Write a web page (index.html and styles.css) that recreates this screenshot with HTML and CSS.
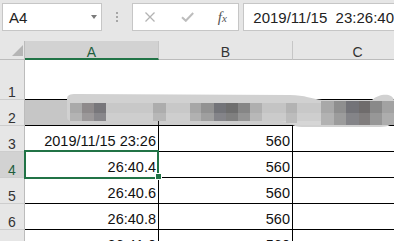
FILE: index.html
```html
<!DOCTYPE html>
<html>
<head>
<meta charset="utf-8">
<link rel="stylesheet" href="styles.css">
</head>
<body>
<div class="app">
  <div class="fbar">
    <div class="namebox"><span class="ref">A4</span><span class="caret"></span></div>
    <div class="grip"><i></i><i></i><i></i></div>
    <div class="fbtns">
      <svg class="ic-x" width="10" height="10" viewBox="0 0 10 10"><path d="M0.5 0.5L9.5 9.5M9.5 0.5L0.5 9.5" stroke="#b3b3b3" stroke-width="1.3" fill="none"/></svg>
      <svg class="ic-ok" width="13" height="10" viewBox="0 0 13 10"><path d="M1 5.2L4.8 8.8L12.2 1" stroke="#bdbdbd" stroke-width="2" fill="none"/></svg>
      <span class="fx">f<i>x</i></span>
    </div>
    <div class="formula">2019/11/15  23:26:40</div>
  </div>
  <div class="sheet">
    <div class="corner"><span class="tri"></span></div>
    <div class="ch sel">A</div><div class="ch">B</div><div class="ch">C</div>

    <div class="rh">1</div><div class="c r1"></div><div class="c r1"></div><div class="c r1"></div>
    <div class="rh">2</div><div class="c r2"></div><div class="c r2"></div><div class="c r2"></div>
    <div class="rh">3</div><div class="c">2019/11/15 23:26</div><div class="c">560</div><div class="c"></div>
    <div class="rh sel">4</div><div class="c active">26:40.4</div><div class="c">560</div><div class="c"></div>
    <div class="rh">5</div><div class="c">26:40.6</div><div class="c">560</div><div class="c"></div>
    <div class="rh">6</div><div class="c">26:40.8</div><div class="c">560</div><div class="c"></div>
    <div class="rh">7</div><div class="c">26:41.0</div><div class="c">560</div><div class="c"></div>
  </div>
  <svg class="redact" width="394" height="241" viewBox="0 0 394 241">
    <path d="M67 99C67 95 70 94 76 94L290 95C305 95 312 99 322 100L372 100C378 94 392 92 394 100L394 121C392 126 385 127 378 127L302 127C292 127 290 122 280 121L72 121C68 121 67 119 67 117Z" fill="#d1d1d1"/>
    <rect x="70" y="103" width="324" height="18" fill="#c8c8c8"/>
    <rect x="70" y="103" width="12" height="18" fill="#a9a9a9"/>
    <rect x="82" y="103" width="12" height="18" fill="#8e8a8b"/>
    <rect x="94" y="103" width="12" height="18" fill="#78777b"/>
    <rect x="153" y="103" width="13" height="18" fill="#adadad"/>
    <rect x="190" y="103" width="11" height="18" fill="#a7a7a7"/>
    <rect x="201" y="103" width="13" height="18" fill="#929292"/>
    <rect x="214" y="103" width="12" height="18" fill="#737479"/>
    <rect x="226" y="103" width="12" height="18" fill="#6e6e6e"/>
    <rect x="238" y="103" width="12" height="18" fill="#868686"/>
    <rect x="250" y="103" width="12" height="18" fill="#afafaf"/>
    <rect x="262" y="103" width="24" height="18" fill="#c4c4c4"/>
    <rect x="286" y="103" width="11" height="20" fill="#b3b3b3"/>
    <rect x="321" y="101" width="13" height="24" fill="#a8a8a8"/>
    <rect x="334" y="101" width="12" height="24" fill="#8f8f8f"/>
    <rect x="346" y="101" width="13" height="24" fill="#737378"/>
    <rect x="359" y="101" width="11" height="24" fill="#6f6c6c"/>
    <rect x="370" y="101" width="12" height="24" fill="#898989"/>
    <rect x="382" y="101" width="12" height="24" fill="#a2a2a2"/>
    <rect x="70" y="113" width="324" height="12" fill="#ffffff" opacity="0.12"/>
  </svg>
</div>
</body>
</html>
```

FILE: styles.css
```css
body {
  margin: 0;
}

.app {
  position: relative;
  width: 394px;
  height: 241px;
  overflow: hidden;
  background: #fff;
  font-family: "Liberation Sans", Arial, sans-serif;
}

/* formula bar */
.fbar {
  height: 41px;
  box-sizing: border-box;
  background: #e6e6e6;
  display: flex;
  align-items: flex-start;
  padding: 3px 0 0 2px;
}

.namebox {
  width: 102px;
  height: 28px;
  box-sizing: border-box;
  border: 1px solid #c6c6c6;
  background: #fff;
  display: flex;
  align-items: center;
  justify-content: space-between;
  padding: 0 4px 0 6px;
  font-size: 15px;
  color: #222;
}

.caret {
  width: 0;
  height: 0;
  border-left: 3.5px solid transparent;
  border-right: 3.5px solid transparent;
  border-top: 4px solid #7a7a7a;
}

.grip {
  margin: 9px 0 0 14px;
  display: flex;
  flex-direction: column;
  gap: 2px;
}

.grip i {
  display: block;
  width: 2px;
  height: 2px;
  background: #a6a6a6;
}

.fbtns {
  margin-left: 14px;
  width: 110px;
  height: 28px;
  box-sizing: border-box;
  border: 1px solid #c6c6c6;
  background: #fff;
  display: flex;
  align-items: center;
  padding-left: 12px;
}

.ic-ok {
  margin-left: 26px;
}

.fx {
  margin-left: 24px;
  font-family: "Liberation Serif", "Times New Roman", serif;
  font-style: italic;
  font-size: 15px;
  color: #555;
  line-height: 1;
}

.fx i {
  font-size: 11px;
}

.formula {
  margin-left: 4px;
  flex: 1;
  height: 28px;
  box-sizing: border-box;
  border: 1px solid #c6c6c6;
  border-right: none;
  background: #fff;
  display: flex;
  align-items: center;
  padding-left: 9px;
  font-size: 15px;
  color: #222;
  white-space: pre;
}

/* sheet */
.sheet {
  display: grid;
  grid-template-columns: 25px 134px 134px 130px;
  grid-template-rows: 19px 40px 26px 26px 26px 26px 26px 26px;
  width: 423px;
}

.sheet > div {
  box-sizing: border-box;
}

.corner {
  background: #e6e6e6;
  border-right: 1px solid #bcbcbc;
  border-bottom: 1px solid #bcbcbc;
  position: relative;
}

.tri {
  position: absolute;
  left: 12px;
  top: 4px;
  width: 0;
  height: 0;
  border-left: 11px solid transparent;
  border-bottom: 11px solid #b5b5b5;
}

.ch {
  background: #e6e6e6;
  border-right: 1px solid #c6c6c6;
  border-bottom: 1px solid #bcbcbc;
  display: flex;
  align-items: flex-end;
  justify-content: center;
  padding-bottom: 1px;
  font-size: 14px;
  line-height: 12px;
  color: #333;
}

.ch.sel {
  background: #d2d2d2;
  border-bottom: 2px solid #217346;
  padding-bottom: 0;
  color: #1f5e3e;
}

.rh {
  background: #e6e6e6;
  border-right: 1px solid #bcbcbc;
  border-bottom: 1px solid #cdcdcd;
  display: flex;
  align-items: flex-end;
  justify-content: center;
  padding-bottom: 1px;
  font-size: 14px;
  line-height: 12px;
  color: #333;
}

.rh.sel {
  background: #d2d2d2;
  color: #1f5e3e;
}

.c {
  border-right: 1px solid #000;
  border-bottom: 1px solid #000;
  display: flex;
  align-items: flex-end;
  justify-content: flex-end;
  padding: 0 2px 2px 0;
  font-size: 14.5px;
  line-height: 16px;
  color: #111;
  white-space: nowrap;
}

.c.r1 {
  border-right: none;
}

.c.r2 {
  background: #c6c6c6;
}

.active {
  position: relative;
}

.active::before {
  content: "";
  position: absolute;
  left: -1px;
  top: -2px;
  right: -1px;
  bottom: -2px;
  border: 2px solid #217346;
}

.active::after {
  content: "";
  position: absolute;
  right: -4px;
  bottom: -3px;
  width: 7px;
  height: 7px;
  box-sizing: border-box;
  background: #217346;
  border: 1px solid #fff;
}

.redact {
  position: absolute;
  left: 0;
  top: 0;
}
```
